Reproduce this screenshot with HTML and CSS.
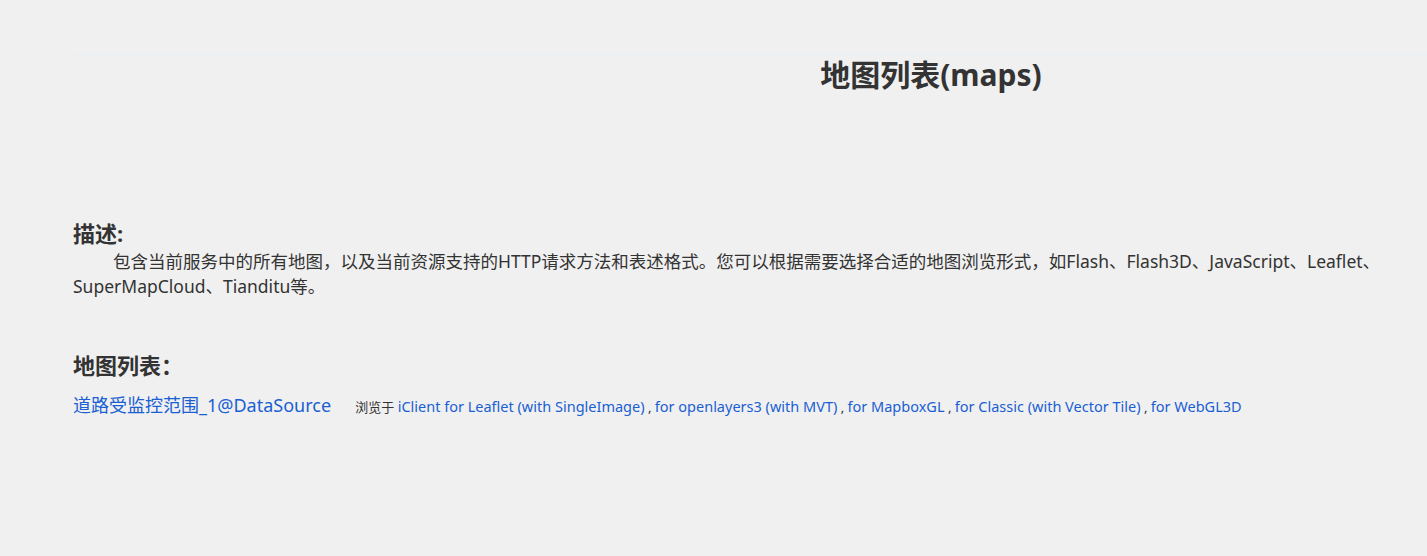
FILE: index.html
```html
<!DOCTYPE html>
<html lang="zh-CN">
<head>
    <meta charset="UTF-8">
    <title>地图列表(maps)</title>
    <link rel="stylesheet" href="styles.css">
</head>
<body>
    <div class="page">
        <div class="title-bar">
            <h1 class="title">地图列表(maps)</h1>
        </div>

        <section class="desc">
            <h3>描述:</h3>
            <p>包含当前服务中的所有地图，以及当前资源支持的HTTP请求方法和表述格式。您可以根据需要选择合适的地图浏览形式，如Flash、Flash3D、JavaScript、Leaflet、SuperMapCloud、Tianditu等。</p>
        </section>

        <section class="map-list">
            <h3>地图列表：</h3>
            <ul>
                <li>
                    <a class="map-name" href="#">道路受监控范围_1@DataSource</a>
                    <span class="browse">浏览于
                        <a href="#">iClient for Leaflet (with SingleImage)</a> ,
                        <a href="#">for openlayers3 (with MVT)</a> ,
                        <a href="#">for MapboxGL</a> ,
                        <a href="#">for Classic (with Vector Tile)</a> ,
                        <a href="#">for WebGL3D</a>
                    </span>
                </li>
            </ul>
        </section>
    </div>
</body>
</html>
```

FILE: styles.css
```css
* {
    margin: 0;
    padding: 0;
    box-sizing: border-box;
}

:root {
    --bg: #f0f0f0;
    --text: #333333;
    --link: #1a5fd3;
    --line: #e7eef5;
}

body {
    background: var(--bg);
    color: var(--text);
    font-family: "Noto Sans", "Noto Sans CJK SC", sans-serif;
}

.page {
    padding: 54px 40px 60px 73px;
}

.title-bar {
    border-top: 1px solid var(--line);
    margin-right: -40px;
    padding-left: 362px;
    text-align: center;
}

.title {
    font-size: 30px;
    font-weight: bold;
    line-height: 40px;
    margin-top: 0;
}

.desc {
    margin-top: 124px;
}

h3 {
    font-size: 22px;
    font-weight: bold;
    line-height: 28px;
}

.desc p {
    font-size: 17.5px;
    line-height: 25px;
    text-indent: 40px;
    margin-top: 2px;
}

.map-list {
    margin-top: 52px;
}

.map-list ul {
    list-style: none;
    margin-top: 14px;
}

.map-list a {
    color: var(--link);
    text-decoration: none;
}

.map-name {
    font-size: 18px;
    line-height: 24px;
}

.browse {
    font-size: 13px;
    margin-left: 20px;
}

.browse a {
    font-size: 14.5px;
}
```
